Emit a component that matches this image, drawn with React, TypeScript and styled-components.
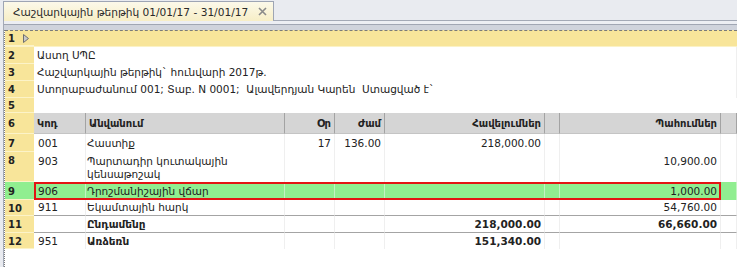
import styled, { createGlobalStyle } from "styled-components";

const GlobalStyle = createGlobalStyle`
  html, body {
    margin: 0;
    padding: 0;
    background: #e9ebf0;
  }
  body {
    font-family: "DejaVu Sans", Tahoma, sans-serif;
    font-size: 10.5px;
    color: #222;
  }
  * {
    box-sizing: border-box;
  }
`;

const COLS = "29px 52px 199px 50px 50px 160px 15px 161px 1fr";

const Page = styled.div`
  width: 737px;
  height: 267px;
  overflow: hidden;
  display: flex;
  flex-direction: column;
  background: #e9ebf0;
`;

const TabBar = styled.div`
  height: 20px;
  flex: none;
  display: flex;
  align-items: flex-end;
  padding-left: 3px;
  position: relative;
  z-index: 1;
`;

const Tab = styled.div`
  width: 271px;
  height: 20px;
  margin-bottom: -1px;
  border: 1px solid #9ea5b4;
  border-bottom: none;
  background: linear-gradient(#fcf9ea, #f7eec6);
  display: flex;
  align-items: center;
  justify-content: space-between;
  padding: 0 6px 0 9px;
  font-size: 10.6px;
  color: #2a2a2a;
  white-space: nowrap;
  overflow: hidden;

  svg {
    flex: none;
  }
`;

const Frame = styled.div`
  flex: 1;
  margin-left: 3px;
  border-left: 1px solid #a3a9b6;
  border-top: 1px solid #a3a9b6;
  display: flex;
  flex-direction: column;
  background: #fff;
`;

const Strip = styled.div`
  height: 4px;
  flex: none;
  background: #eceef3;
  border-bottom: 1px solid #a0a6b3;
`;

const Band = styled.div`
  height: 5px;
  flex: none;
  background: #cfd3dc;
`;

const Sheet = styled.div`
  flex: 1;
  border-left: 1px dotted #7d7d7d;
  background: #fff;
`;

const Cell = styled.div<{ $align?: "left" | "right"; $bold?: boolean; $span?: boolean }>`
  padding: 0 3px 0 ${(p) => (p.$align === "right" ? "0" : "3px")};
  text-align: ${(p) => p.$align ?? "left"};
  font-weight: ${(p) => (p.$bold ? "bold" : "normal")};
  line-height: 13px;
  white-space: ${(p) => (p.$span ? "pre" : "normal")};
  grid-column: ${(p) => (p.$span ? "2 / -1" : "auto")};
  border-right: 1px solid var(--col-line, #efefef);
  align-self: stretch;
  display: flex;
  flex-direction: column;
  justify-content: var(--cell-valign, center);
  padding-top: var(--cell-pad, 0);
`;

const CodeCell = styled(Cell)`
  padding-left: 4px;
`;

const NameCell = styled(Cell)`
  padding-left: 1px;
`;

const RowNum = styled.div<{ $bg?: string }>`
  background: ${(p) => p.$bg ?? "#f8e59a"};
  box-shadow: inset 0 -1px #fcf3c8;
  font-weight: bold;
  font-size: 10px;
  padding: 0 5px 0 3px;
  display: flex;
  align-items: var(--cell-valign-num, center);
  justify-content: space-between;
  padding-top: var(--cell-pad, 0);
`;

const Row = styled.div<{ $h: number; $bg?: string; $rule?: boolean; $top?: boolean }>`
  display: grid;
  grid-template-columns: ${COLS};
  height: ${(p) => p.$h}px;
  background: ${(p) => p.$bg ?? "transparent"};
  position: relative;
  --cell-valign: ${(p) => (p.$top ? "flex-start" : "center")};
  --cell-valign-num: ${(p) => (p.$top ? "flex-start" : "center")};
  --cell-pad: ${(p) => (p.$top ? "3px" : "0")};

  & > ${Cell} {
    border-bottom: ${(p) => (p.$rule ? "1px solid #a4a4a4" : "none")};
  }
`;

const MarkerRow = styled(Row)`
  background: #f8e59a;
  border-top: 1px dashed #7a7a7a;
  border-bottom: 1px solid #fbf2c6;
`;

const HeadCell = styled.div<{ $align?: "left" | "right" }>`
  background: #d5d5d5;
  border-right: 1px solid #a3a3a3;
  border-bottom: 1px solid #c4c4c4;
  font-weight: bold;
  font-size: 10px;
  display: flex;
  align-items: center;
  justify-content: ${(p) => (p.$align === "right" ? "flex-end" : "flex-start")};
  padding: 0 3px;
  white-space: nowrap;
`;

const Selection = styled.div`
  position: absolute;
  left: 29px;
  right: 16px;
  top: 0;
  bottom: 0;
  border: 2px solid #e31414;
  pointer-events: none;
`;

const GreenRow = styled(Row)`
  --col-line: #c2f4c2;
`;

interface ILine {
  n: number;
  code: string;
  name: string;
  day?: string;
  hours?: string;
  add?: string;
  ded?: string;
  h: number;
  bold?: boolean;
  rule?: boolean;
  top?: boolean;
}

const lines: ILine[] = [
  { n: 7, code: "001", name: "Հաստիք", day: "17", hours: "136.00", add: "218,000.00", h: 18 },
  { n: 8, code: "903", name: "Պարտադիր կուտակային կենսաթոշակ", ded: "10,900.00", h: 30, top: true },
];

const tail: ILine[] = [
  { n: 10, code: "911", name: "Եկամտային հարկ", ded: "54,760.00", h: 16, rule: true },
  { n: 11, code: "", name: "Ընդամենը", add: "218,000.00", ded: "66,660.00", h: 17, bold: true, rule: true },
  { n: 12, code: "951", name: "Առձեռն", add: "151,340.00", h: 16, bold: true },
];

function DataCells({ line }: { line: ILine }) {
  return (
    <>
      <CodeCell>{line.code}</CodeCell>
      <NameCell $bold={line.bold}>{line.name}</NameCell>
      <Cell $align="right">{line.day}</Cell>
      <Cell $align="right">{line.hours}</Cell>
      <Cell $align="right" $bold={line.bold}>{line.add}</Cell>
      <Cell />
      <Cell $align="right" $bold={line.bold}>{line.ded}</Cell>
      <Cell />
    </>
  );
}

function Marker() {
  return (
    <svg width="6" height="9" viewBox="0 0 6 9">
      <path d="M0.5 0.5 L5.5 4.5 L0.5 8.5 Z" fill="#c9c9c9" stroke="#6f6f6f" strokeWidth="1" />
    </svg>
  );
}

function Close() {
  return (
    <svg width="9" height="9" viewBox="0 0 9 9">
      <path d="M1 1 L8 8 M8 1 L1 8" stroke="#8a8a8a" strokeWidth="1.6" />
    </svg>
  );
}

export default function App() {
  return (
    <Page>
      <GlobalStyle />
      <TabBar>
        <Tab>
          <span>Հաշվարկային թերթիկ 01/01/17 - 31/01/17</span>
          <Close />
        </Tab>
      </TabBar>
      <Frame>
        <Strip />
        <Band />
        <Sheet>
          <MarkerRow $h={17}>
            <RowNum $bg="transparent">
              1 <Marker />
            </RowNum>
          </MarkerRow>
          <Row $h={17}>
            <RowNum>2</RowNum>
            <Cell $span>Աստղ ՍՊԸ</Cell>
          </Row>
          <Row $h={17}>
            <RowNum>3</RowNum>
            <Cell $span>Հաշվարկային թերթիկ` հունվարի 2017թ.</Cell>
          </Row>
          <Row $h={17}>
            <RowNum>4</RowNum>
            <Cell $span>{"Ստորաբաժանում 001; Տաբ. N 0001;  Ալավերդյան Կարեն  Ստացված է`"}</Cell>
          </Row>
          <Row $h={15}>
            <RowNum>5</RowNum>
          </Row>
          <Row $h={21}>
            <RowNum>6</RowNum>
            <HeadCell>Կոդ</HeadCell>
            <HeadCell>Անվանում</HeadCell>
            <HeadCell $align="right">Օր</HeadCell>
            <HeadCell $align="right">Ժամ</HeadCell>
            <HeadCell $align="right">Հավելումներ</HeadCell>
            <HeadCell />
            <HeadCell $align="right">Պահումներ</HeadCell>
            <HeadCell />
          </Row>
          {lines.map((line) => (
            <Row key={line.n} $h={line.h} $top={line.top} $rule={line.rule}>
              <RowNum>{line.n}</RowNum>
              <DataCells line={line} />
            </Row>
          ))}
          <GreenRow $h={18} $bg="#90ee90">
            <RowNum $bg="#90ee90">9</RowNum>
            <DataCells line={{ n: 9, code: "906", name: "Դրոշմանիշային վճար", ded: "1,000.00", h: 18 }} />
            <Selection />
          </GreenRow>
          {tail.map((line) => (
            <Row key={line.n} $h={line.h} $rule={line.rule}>
              <RowNum>{line.n}</RowNum>
              <DataCells line={line} />
            </Row>
          ))}
        </Sheet>
      </Frame>
    </Page>
  );
}
